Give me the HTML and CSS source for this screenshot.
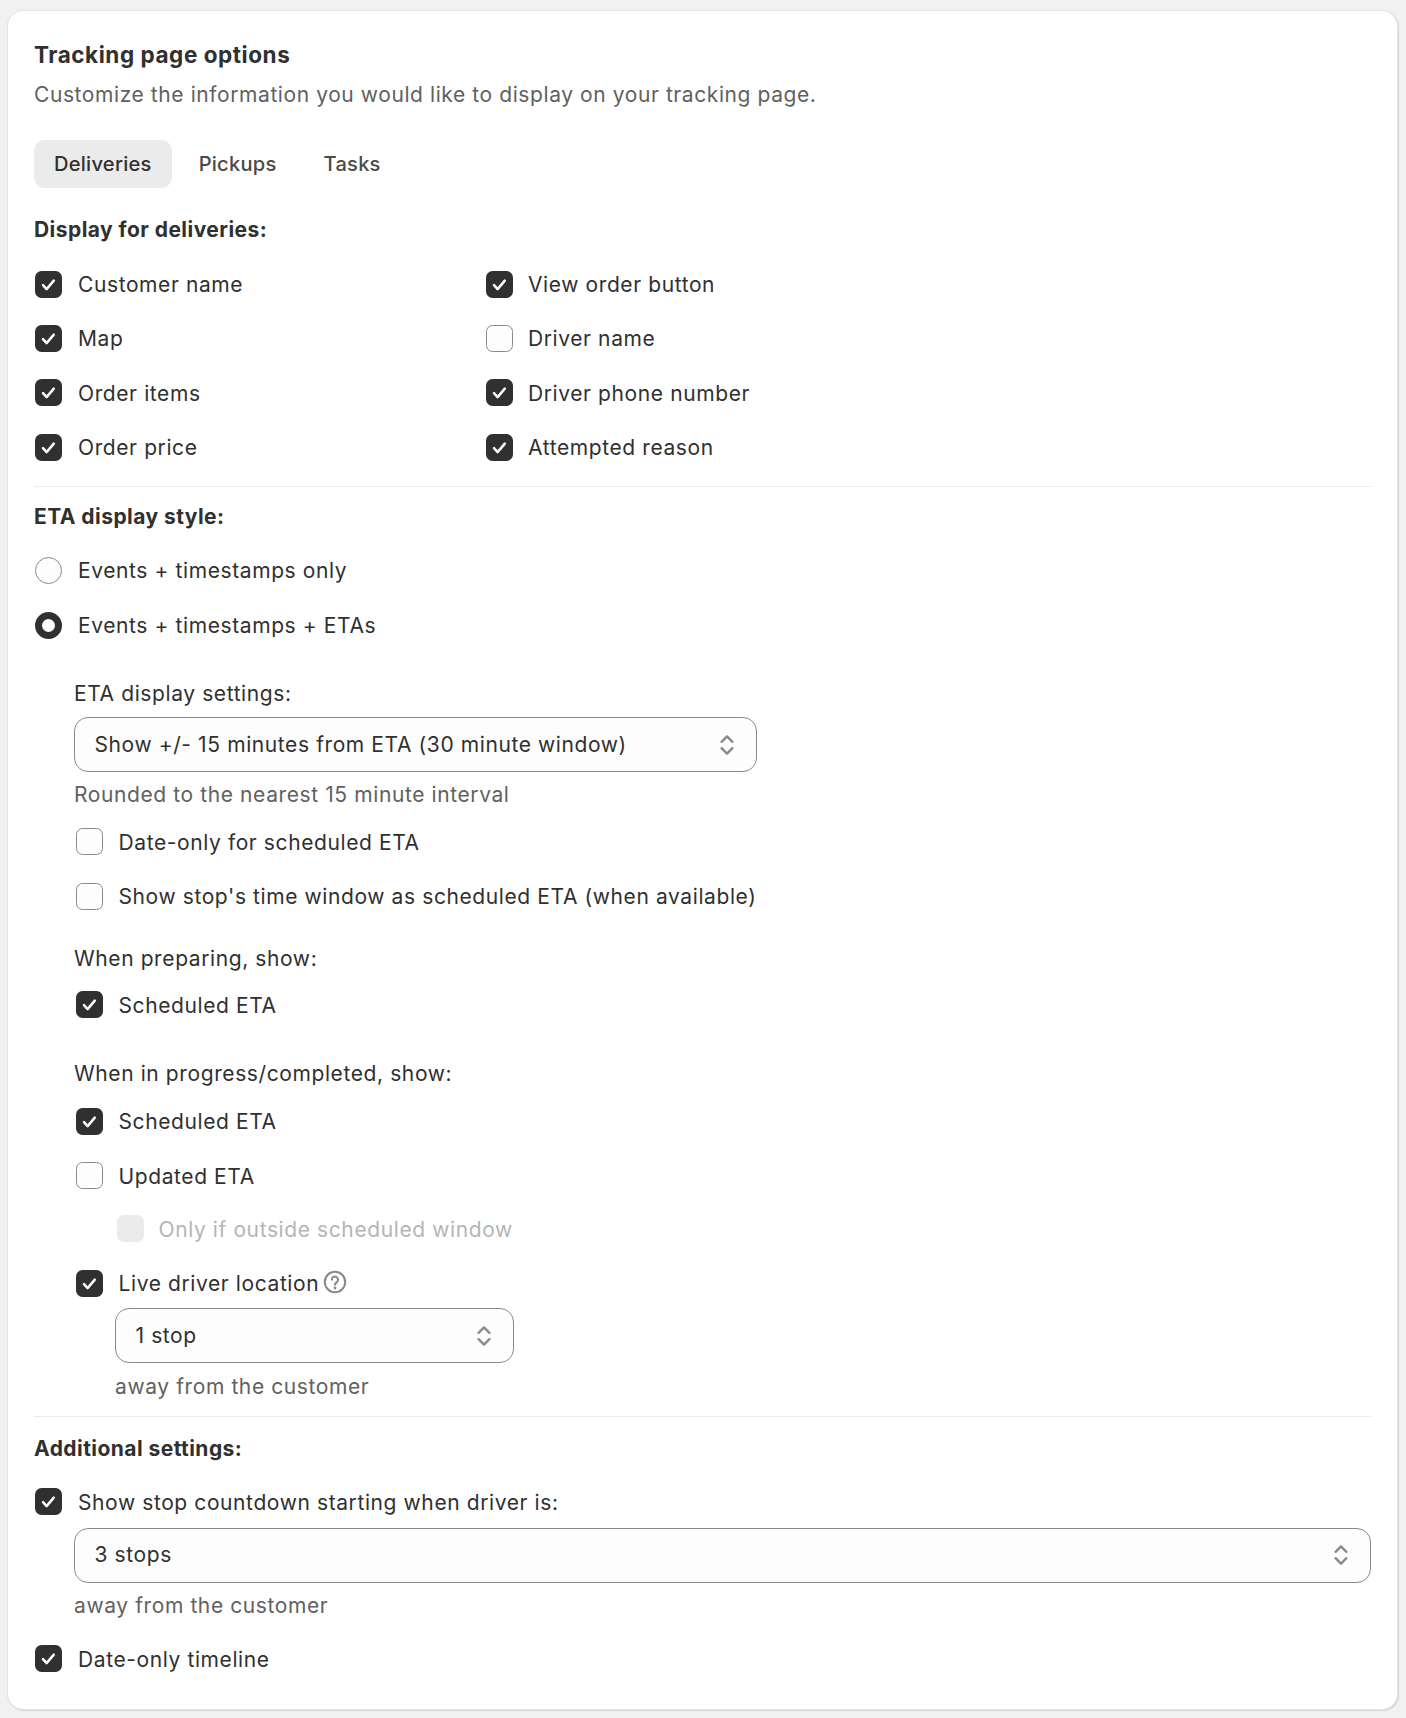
FILE: index.html
```html
<!DOCTYPE html>
<html lang="en">
<head>
<meta charset="utf-8">
<title>Tracking page options</title>
<link rel="stylesheet" href="styles.css">
</head>
<body>
<svg class="defs" width="0" height="0" aria-hidden="true">
  <symbol id="tick" viewBox="0 0 27 27"><path d="M8 14.2l3.6 3.9 7.2-8.5" fill="none" stroke="#fff" stroke-width="2.5" stroke-linecap="round" stroke-linejoin="round"/></symbol>
  <symbol id="updown" viewBox="0 0 16 24"><path d="M2.6 8.8L8 3.4l5.4 5.4M2.6 15.2L8 20.6l5.4-5.4" fill="none" stroke="#8a8a8a" stroke-width="2.4" stroke-linecap="round" stroke-linejoin="round"/></symbol>
</svg>
<main class="card">
  <h1 class="title">Tracking page options</h1>
  <p class="subtitle">Customize the information you would like to display on your tracking page.</p>
  <nav class="tabs">
    <span class="tab active">Deliveries</span>
    <span class="tab">Pickups</span>
    <span class="tab">Tasks</span>
  </nav>

  <section class="section">
    <h2 class="heading">Display for deliveries:</h2>
    <div class="grid">
      <label class="row"><span class="box on"><svg><use href="#tick"/></svg></span>Customer name</label>
      <label class="row col2"><span class="box on"><svg><use href="#tick"/></svg></span>View order button</label>
      <label class="row"><span class="box on"><svg><use href="#tick"/></svg></span>Map</label>
      <label class="row col2"><span class="box"></span>Driver name</label>
      <label class="row"><span class="box on"><svg><use href="#tick"/></svg></span>Order items</label>
      <label class="row col2"><span class="box on"><svg><use href="#tick"/></svg></span>Driver phone number</label>
      <label class="row"><span class="box on"><svg><use href="#tick"/></svg></span>Order price</label>
      <label class="row col2"><span class="box on"><svg><use href="#tick"/></svg></span>Attempted reason</label>
    </div>
  </section>

  <section class="section ruled">
    <h2 class="heading">ETA display style:</h2>
    <label class="row"><span class="radio"></span>Events + timestamps only</label>
    <label class="row radio-second"><span class="radio on"></span>Events + timestamps + ETAs</label>
    <div class="nested">
      <div class="label first">ETA display settings:</div>
      <div class="select narrow-a"><span>Show +/- 15 minutes from ETA (30 minute window)</span><svg class="chev"><use href="#updown"/></svg></div>
      <div class="help">Rounded to the nearest 15 minute interval</div>
      <label class="row tight"><span class="box"></span>Date-only for scheduled ETA</label>
      <label class="row"><span class="box"></span>Show stop's time window as scheduled ETA (when available)</label>
      <div class="label group">When preparing, show:</div>
      <label class="row tight2"><span class="box on"><svg><use href="#tick"/></svg></span>Scheduled ETA</label>
      <div class="label group2">When in progress/completed, show:</div>
      <label class="row tight3"><span class="box on"><svg><use href="#tick"/></svg></span>Scheduled ETA</label>
      <label class="row"><span class="box"></span>Updated ETA</label>
      <label class="row disabled indent"><span class="box"></span>Only if outside scheduled window</label>
      <label class="row"><span class="box on"><svg><use href="#tick"/></svg></span>Live driver location<svg class="q" viewBox="0 0 24 24"><circle cx="12" cy="12" r="10.2" fill="none" stroke="#8a8a8a" stroke-width="2.1"/><path d="M8.9 9.6a3.1 3.1 0 1 1 4.9 2.5c-1 .7-1.8 1.3-1.8 2.6" fill="none" stroke="#8a8a8a" stroke-width="2.1" stroke-linecap="round"/><circle cx="12" cy="18" r="1.4" fill="#8a8a8a"/></svg></label>
      <div class="sub-indent">
        <div class="select narrow-b"><span>1 stop</span><svg class="chev"><use href="#updown"/></svg></div>
        <div class="help">away from the customer</div>
      </div>
    </div>
  </section>

  <section class="section ruled additional">
    <h2 class="heading">Additional settings:</h2>
    <label class="row"><span class="box on"><svg><use href="#tick"/></svg></span>Show stop countdown starting when driver is:</label>
    <div class="nested flush">
      <div class="select"><span>3 stops</span><svg class="chev"><use href="#updown"/></svg></div>
      <div class="help">away from the customer</div>
    </div>
    <label class="row last"><span class="box on"><svg><use href="#tick"/></svg></span>Date-only timeline</label>
  </section>
</main>
</body>
</html>
```

FILE: styles.css
```css
* { box-sizing: border-box; }
html, body { margin: 0; padding: 0; }
body {
  background: #f1f1f1;
  font-family: Inter, "Liberation Sans", sans-serif;
  font-size: 21px;
  letter-spacing: 0.6px;
  line-height: 24px;
  color: #303030;
  padding: 11px 9px 9px 8px;
}
.defs { position: absolute; }
.card {
  background: #fff;
  border-radius: 15px;
  box-shadow: 0 0 0 1px #e3e3e3, 1px 1px 1px 1px #d4d4d4;
  height: 1698px;
  padding: 32px 26px 0;
}
.title { margin: 0; font-size: 22.5px; letter-spacing: 0.55px; font-weight: 650; line-height: 24px; color: #303030; }
.subtitle { margin: 16px 0 0; line-height: 24px; letter-spacing: 0.585px; color: #616161; }
.tabs { display: flex; gap: 9px; margin-top: 33px; height: 48px; }
.tab { display: flex; align-items: center; padding: 0 20px 0 18px; border-radius: 11px; font-size: 20.1px; letter-spacing: 0.25px; font-weight: 500; color: #4a4a4a; }
.tab.active { background: #ebebeb; color: #303030; padding: 0 20px 0 20px; }
.heading { margin: 0; font-size: 21px; letter-spacing: 0.45px; font-weight: 650; line-height: 24px; color: #303030; }
.grid { display: grid; grid-template-columns: 451px 1fr; row-gap: 24.4px; margin-top: 28px; }
.section:first-of-type { margin-top: 30px; }
.row { display: flex; align-items: center; height: 30px; gap: 16px; padding-left: 1px; color: #303030; }
.row.col2 { gap: 15px; }
.section > .row, .nested > .row { margin-top: 24.4px; }
.section > .heading + .row { margin-top: 27.5px; }
.section > .row.radio-second { margin-top: 25.4px; }
.grid .row { margin: 0; }
.box { flex: none; width: 27px; height: 27px; margin-top: -2px; border-radius: 6.5px; border: 1px solid #8a8a8a; background: #fdfdfd; display: block; }
.box.on { background: #303030; border: 0; }
.box svg { display: block; width: 27px; height: 27px; }
.radio { flex: none; width: 27px; height: 27px; margin-top: -2px; border-radius: 50%; border: 1px solid #8a8a8a; background: #fdfdfd; }
.radio.on { border: 7.5px solid #303030; background: #fff; }
.ruled { border-top: 1px solid #ebebeb; margin-top: 22.4px; padding-top: 18px; }
.ruled.additional { margin-top: 17px; padding-top: 19.4px; }
.section.additional > .heading + .row { margin-top: 27.2px; }
.nested { padding-left: 40px; }
.nested.flush { padding-left: 40px; margin-top: 8px; }
.nested > .row { padding-left: 2px; gap: 15.5px; }
.label { color: #303030; }
.label.first { margin-top: 41px; }
.label.group { margin-top: 34.5px; }
.label.group2 { margin-top: 41px; }
.select {
  display: flex;
  align-items: center;
  justify-content: space-between;
  height: 55px;
  border: 1px solid #8a8a8a;
  border-radius: 14px;
  background: #fdfdfd;
  padding: 0 21px 0 19.5px;
  margin-top: 11px;
  color: #303030;
}
.narrow-a { width: 683px; }
.narrow-b { width: 399px; }
.chev { width: 16px; height: 24px; flex: none; }
.help { color: #616161; margin-top: 11px; }
.sub-indent .help { margin-top: 12px; }
.nested > .row.tight { margin-top: 20.5px; }
.nested > .row.tight2 { margin-top: 20px; }
.nested > .row.tight3 { margin-top: 21.3px; }
.nested > .row.indent { padding-left: 42px; margin-top: 23.4px; }
.disabled { color: #b5b5b5; }
.disabled .box { background: #ebebeb; border: 0; margin-left: 1px; margin-right: -1px; }
.q { width: 24px; height: 24px; margin: -4px 0 0 -12px; flex: none; }
.sub-indent { padding-left: 41px; margin-top: -2px; }
.section > .row.last { margin-top: 27px; }
.flush .select { margin-top: 10px; }
```
